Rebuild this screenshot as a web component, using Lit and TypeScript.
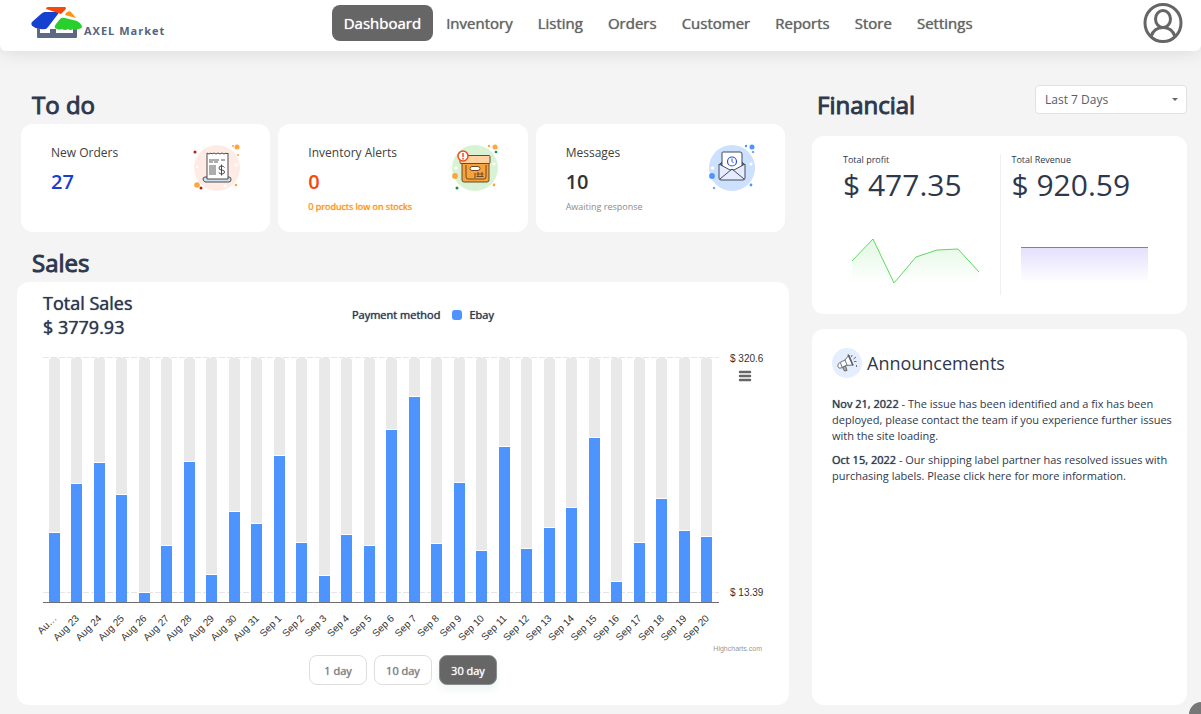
import { LitElement, html, css, svg } from "lit";
import { customElement, state } from "lit/decorators.js";
import { classMap } from "lit/directives/class-map.js";

const NAV = ["Dashboard", "Inventory", "Listing", "Orders", "Customer", "Reports", "Store", "Settings"];

/* Daily sales: axis label and bar height in chart units */
const SALES: [string, number][] = [
  ["Au…", 69], ["Aug 23", 118], ["Aug 24", 139], ["Aug 25", 107], ["Aug 26", 9], ["Aug 27", 56],
  ["Aug 28", 140], ["Aug 29", 27], ["Aug 30", 90], ["Aug 31", 78], ["Sep 1", 146], ["Sep 2", 59],
  ["Sep 3", 26], ["Sep 4", 67], ["Sep 5", 56], ["Sep 6", 172], ["Sep 7", 205], ["Sep 8", 58],
  ["Sep 9", 119], ["Sep 10", 51], ["Sep 11", 155], ["Sep 12", 53], ["Sep 13", 74], ["Sep 14", 94],
  ["Sep 15", 164], ["Sep 16", 20], ["Sep 17", 59], ["Sep 18", 103], ["Sep 19", 71], ["Sep 20", 65],
];

const logo = html`<svg width="52" height="32" viewBox="0 0 52 32" aria-hidden="true">
  <path d="M6 21h3v5h10v-4h6v4h17v-5h4v9q0 1-1 1H7q-1 0-1-1z" fill="#5a6a84" />
  <path d="M10 7Q12 5 14 5h12q2 0 1 2L17 20q-2 3-5 2-2 1-4-1-3 1-5-1-4-2-2-5z" fill="#1640d0" />
  <path d="M17 0h17q2 1 0 3l-4 4-15-5q0-2 2-2z" fill="#f7480b" />
  <path d="M35 6q3-3 5-1l5 6-11-3z" fill="#ff9212" />
  <path d="M25 17l4-5q2-2 5-1l12 3q4 2 5 5 0 3-4 3-2 2-5 0-3 2-5 0-3 2-6 0-3 1-5 0-4-1-1-5z" fill="#29cf2c" />
</svg>`;

const orderIcon = html`<svg width="50" height="50" viewBox="0 0 50 50" aria-hidden="true">
  <circle cx="24" cy="25" r="23" fill="#ffebe6" />
  <circle cx="44" cy="4" r="2.5" fill="#ffa53c" /><circle cx="40" cy="3" r="1" fill="#ffa53c" />
  <circle cx="45" cy="12" r="1" fill="#ffa53c" /><circle cx="43" cy="42" r="1.3" fill="#ffa53c" />
  <circle cx="4" cy="42" r="2.8" fill="#ffa53c" />
  <circle cx="2" cy="9" r="1.5" fill="#bf1d0a" /><circle cx="8" cy="45" r="1.5" fill="#bf1d0a" />
  <circle cx="4" cy="24" r="1.3" fill="#fff" /><circle cx="43" cy="22" r="1.6" fill="#fff" /><circle cx="32" cy="43" r="1.6" fill="#fff" />
  <path d="M12 34q-2 0-2 2t2 3h24q2 0 2-2.500T36 34z" fill="#cddff0" stroke="#4a4a4a" />
  <path d="M14 36V10l2 1 2-1 1 1 2-1 2 1 2-1 2 1 2-1 2 1 2-1 1 1 1-1v26z" fill="#fff" stroke="#4a4a4a" />
  <path d="M16 17h10M28 17h4M16 19h4M21 19h4M16 23h7M16 25h7M16 27h7M16 29h7M16 31h7" stroke="#4a4a4a" stroke-width=".9" />
  <path d="M31.500 24.500q-1-1.500-3-1.500-2.500 0-2.500 2t2.500 2q3 0 3 2t-2.500 2q-2 0-3.300-1.500M28.500 21.500v11" fill="none" stroke="#4a4a4a" />
</svg>`;

const stockIcon = html`<svg width="50" height="50" viewBox="0 0 50 50" aria-hidden="true">
  <circle cx="24" cy="25" r="23" fill="#d8f3d4" />
  <circle cx="44" cy="4" r="2.500" fill="#ffa53c" /><circle cx="38" cy="3" r="1.200" fill="#ffa53c" />
  <circle cx="45" cy="9" r="1.300" fill="#11914b" /><circle cx="6" cy="45" r="1.500" fill="#11914b" />
  <circle cx="43" cy="42" r="1.400" fill="#ffa53c" /><circle cx="4" cy="33" r="2.900" fill="#ffa53c" />
  <circle cx="5" cy="25" r="1.800" fill="#fff" /><circle cx="43" cy="21" r="1.600" fill="#fff" />
  <path d="M11 20h27v17q0 2-2 2H13q-2 0-2-2z" fill="#f8a33a" stroke="#6b4a2a" />
  <path d="M10 12.500h28q1 0 1 1v6q0 1-1 1H10q-1 0-1-1v-6q0-1 1-1z" fill="#ffd3a1" stroke="#6b4a2a" />
  <path d="M15 22v12q0 2 2 2h16q2 0 2-2V22M24 30v5M27 29v5M31 29v5M25.500 31h7M25.500 33.500h7" fill="none" stroke="#6b4a2a" />
  <rect x="19" y="23.500" width="10" height="4" rx="2" fill="#fff" stroke="#6b4a2a" />
  <circle cx="12" cy="13" r="5" fill="#fff" stroke="#f04a20" stroke-width="1.500" />
  <path d="M12 10v4M12 15v1.500" stroke="#f04a20" stroke-width="1.500" />
</svg>`;

const mailIcon = html`<svg width="50" height="50" viewBox="0 0 50 50" aria-hidden="true">
  <circle cx="24" cy="25" r="23" fill="#cce0ff" />
  <circle cx="44" cy="4" r="2.500" fill="#4d94ff" /><circle cx="38" cy="3" r="1.200" fill="#4d94ff" />
  <circle cx="45" cy="9" r="1.300" fill="#8f9df2" /><circle cx="6" cy="45" r="1.300" fill="#8f9df2" />
  <circle cx="43" cy="42" r="1.400" fill="#4d94ff" /><circle cx="4" cy="33" r="2.900" fill="#4d94ff" />
  <circle cx="4.500" cy="25" r="1.800" fill="#fff" /><circle cx="43" cy="21" r="1.600" fill="#fff" />
  <path d="M11 22l3-3v5zM37 22l-3-3v5z" fill="#4d94ff" stroke="#454a58" />
  <path d="M14 10q0-1 1-1h17q2 0 2 2v19H14z" fill="#fff" stroke="#454a58" />
  <circle cx="24" cy="18.500" r="4.500" fill="none" stroke="#2850d8" stroke-width="1.200" />
  <path d="M24 15.500v3l1.500 1.500" fill="none" stroke="#2850d8" />
  <path d="M11 21l11 6q2-1 4 0l11-6v14q0 2-2 2H13q-2 0-2-2z" fill="#e6ecff" stroke="#454a58" />
  <path d="M12 36l12-10 12 10" fill="none" stroke="#454a58" />
</svg>`;

const megaphone = html`<svg width="30" height="30" viewBox="0 0 30 30" aria-hidden="true">
  <circle cx="15" cy="15" r="15" fill="#e4eeff" />
  <g fill="#fff" stroke="#5c6068" stroke-width=".9">
    <path d="M10.500 19.500l2 3.500 2.500-.5-1.500-4.500z" fill="#aaa" />
    <path d="M8 14.500l5-2.500 4-5 4 10-7 .5-5 2.500q-2 1-3-1.500t2-4z" />
    <path d="M8.500 15l1.500 4M13 12l2 5" />
    <path d="M16 6.500l5 11" stroke-width="1.500" />
    <path d="M19.500 9l.5-2M21.500 11l2.500-2M22 13.500h2.500M24.500 17v2" />
  </g>
</svg>`;

@customElement("sales-chart")
export class SalesChart extends LitElement {
  static styles = css`
    :host { display: block; position: relative; }
    .plot { display: block; width: 100%; height: auto; font-family: "Liberation Sans", Arial, sans-serif; }
    .track { fill: #e9e9e9; }
    .bar { fill: #4d94ff; }
    .grid { stroke: #e6e6e6; stroke-dasharray: 6 2; }
    .axis { stroke: #6e6e6e; }
    .tick { font-size: 10px; fill: #333; text-anchor: end; }
    .scale { font-size: 10px; fill: #333; }
    .credit { font-size: 7px; fill: #999; text-anchor: end; }
    .menu {
      position: absolute; top: 28px; right: 35px; width: 18px; height: 18px;
      display: grid; place-items: center; padding: 0; border: 0; background: none;
    }
  `;

  render() {
    const base = 263;
    const step = 675 / SALES.length;
    return html`
      <svg class="plot" viewBox="0 0 772 316" role="img" aria-label="Total sales per day">
        <line class="grid" x1="26" x2="702" y1="18.500" y2="18.500" />
        <line class="grid" x1="26" x2="702" y1="253.500" y2="253.500" />
        ${SALES.map(([name, value], i) => {
          const mid = 26 + step * (i + 0.5);
          const x = Math.floor(mid - 5);
          return svg`
            <rect class="track" x=${x} y="19" width="11" height="244" rx="3" />
            <rect x=${x} y=${base - value - 1} width="11" height="1" fill="#fff" />
            <rect class="bar" x=${x} y=${base - value} width="11" height=${value} />
            <text class="tick" transform="translate(${mid + 3} 280) rotate(-45)">${name}</text>`;
        })}
        <line class="axis" x1="26" x2="702" y1="263.500" y2="263.500" />
        <text class="scale" x="713" y="23">$ 320.6</text>
        <text class="scale" x="713" y="257">$ 13.39</text>
        <text class="credit" x="745" y="312">Highcharts.com</text>
      </svg>
      <button class="menu" aria-label="Chart menu">
        <svg width="14" height="12" viewBox="0 0 14 12"><path d="M2 2h10M2 6h10M2 10h10" stroke="#666" stroke-width="2.500" stroke-linecap="round" /></svg>
      </button>`;
  }
}

@customElement("app-root")
export class AppRoot extends LitElement {
  @state() private range = "30 day";

  static styles = css`
    :host {
      display: flex; flex-direction: column; min-height: 100vh; box-sizing: border-box;
      background: #f4f4f4; color: #2e384d; font-family: "Open Sans", sans-serif; overflow: hidden;
      position: relative;
    }
    h1, h2, h3, p { margin: 0; font-weight: 400; }
    button, select { font-family: inherit; }
    .link, .range, .legend, .total, .amber, .date { font-weight: 400; text-shadow: 0 0 1px currentColor; }
    .top {
      display: flex; justify-content: space-between; align-items: center; height: 51px; box-sizing: border-box;
      padding: 0 18px 5px 31px; background: #fff; border-radius: 0 0 6px 6px; box-shadow: 0 0 20px rgba(0, 0, 0, .12);
    }
    .brand { display: flex; align-items: flex-end; gap: 1px; padding-right: 8px; color: #55647f; text-decoration: none; }
    .brand-name { font-size: 11px; line-height: 16px; font-weight: 700; letter-spacing: 1px; }
    .nav { display: flex; gap: 1px; }
    .link {
      padding: 6px 12px; border: 1px solid transparent; border-width: 1px 0; border-radius: 8px; color: #666; font-size: 15px; line-height: 22px;
      text-decoration: none;
    }
    .link.active { background: #666; color: #fff; }
    .avatar { display: block; padding: 0; border: 0; background: none; }
    .avatar svg { display: block; }
    .main {
      flex: 1; display: grid; grid-template-columns: minmax(0, 772fr) minmax(0, 375fr); gap: 23px;
      padding: 34px 14px 9px 17px;
    }
    .column { display: flex; flex-direction: column; }
    .title { font-size: 24px; line-height: 32px; -webkit-text-stroke: 1px currentColor; }
    .column > .title { padding: 4px 15px 3px; }
    .column > .title ~ .title { padding-top: 15px; }
    .card { background: #fff; border-radius: 12px; }
    .todos { display: grid; grid-template-columns: repeat(3, minmax(0, 1fr)); gap: 8px; padding: 0 4px; }
    .todo { display: flex; justify-content: space-between; padding: 19px 27px 18px 30px; }
    .label { font-size: 12px; line-height: 20px; color: #404040; }
    .count { padding: 5px 0 4px; font-size: 20px; line-height: 28px; font-weight: 600; }
    .note { min-height: 14px; font-size: 9px; line-height: 14px; }
    .blue { color: #1640d0; }
    .red { color: #f7480b; }
    .dark { color: #333; }
    .amber { color: #ff9212; }
    .grey { color: #8c8c8c; }
    .sales { flex: 1; padding: 9px 0 20px; }
    .sales-head { display: grid; grid-template-columns: 41fr 58fr; align-items: center; padding-left: 26px; }
    .total { font-size: 18px; line-height: 24px; }
    .legend { display: flex; align-items: center; font-size: 11px; line-height: 16px; }
    .swatch { width: 10px; height: 10px; margin: 0 7px 0 12px; border-radius: 3px; background: #4d94ff; }
    .ranges { display: flex; justify-content: center; gap: 7px; }
    .range {
      width: 58px; height: 30px; padding: 0; border: 1px solid #ddd; border-radius: 8px; background: #fff; color: #808080;
      font-size: 11px;
    }
    .range.active { border-color: #8c8c8c; background: #666; color: #fff; box-shadow: 0 4px 8px rgba(0, 128, 96, .08); }
    .finance-head { display: flex; justify-content: space-between; align-items: flex-start; padding-bottom: 15px; }
    .finance-head .title { padding: 4px 0 0 5px; }
    .period { position: relative; width: 152px; }
    .select {
      display: block; width: 100%; height: 29px; padding: 0 9px; border: 1px solid #e2e2e2; border-radius: 4px; background: #fff;
      color: #55606a; font-size: 12px; appearance: none;
    }
    .caret { position: absolute; right: 9px; top: 13px; pointer-events: none; }
    .finance { display: grid; grid-template-columns: 1fr 1fr; padding: 18px 31px 19px; margin-bottom: 15px; }
    .metric + .metric { border-left: 1px solid #f0f0f0; padding-left: 11px; }
    .metric-name { font-size: 9px; line-height: 12px; }
    .metric-value { font-size: 30px; line-height: 38px; }
    .spark { display: block; margin: 32px 0 11px 9px; }
    .news { flex: 1; padding: 19px 12px 19px 20px; }
    .news-head { display: flex; align-items: center; gap: 5px; margin-bottom: 18px; }
    .news-title { font-size: 18px; line-height: 30px; }
    .entry { padding-bottom: 8px; font-size: 11px; line-height: 16px; }
    .help { position: absolute; right: -13px; bottom: -13px; width: 25px; height: 25px; padding: 0; border: 0; border-radius: 50%; background: #777; }
  `;

  render() {
    return html`
      <header class="top">
        <a class="brand" href="#">${logo}<span class="brand-name">AXEL Market</span></a>
        <nav class="nav">
          ${NAV.map((n, i) => html`<a class=${classMap({ link: true, active: i === 0 })} href="#">${n}</a>`)}
        </nav>
        <button class="avatar" aria-label="Account">
          <svg width="40" height="42" viewBox="0 0 40 42" fill="none" stroke="#666" stroke-width="3">
            <ellipse cx="20" cy="21" rx="18" ry="18.500" /><ellipse cx="20" cy="17" rx="7.500" ry="8.500" />
            <path d="M8 34.500Q11 25.500 20 25.500T32 34.500" />
          </svg>
        </button>
      </header>
      <main class="main">
        <div class="column">
          <h2 class="title">To do</h2>
          <div class="todos">
            <section class="card todo">
              <div><h3 class="label">New Orders</h3><p class="count blue">27</p></div>
              ${orderIcon}
            </section>
            <section class="card todo">
              <div><h3 class="label">Inventory Alerts</h3><p class="count red">0</p><p class="note amber">0 products low on stocks</p></div>
              ${stockIcon}
            </section>
            <section class="card todo">
              <div><h3 class="label">Messages</h3><p class="count dark">10</p><p class="note grey">Awaiting response</p></div>
              ${mailIcon}
            </section>
          </div>
          <h2 class="title">Sales</h2>
          <section class="card sales">
            <div class="sales-head">
              <div><h3 class="total">Total Sales</h3><p class="total">$ 3779.93</p></div>
              <div class="legend">Payment method<span class="swatch"></span>Ebay</div>
            </div>
            <sales-chart></sales-chart>
            <div class="ranges">
              ${["1 day", "10 day", "30 day"].map((r) => html`<button
                class=${classMap({ range: true, active: r === this.range })}
                @click=${() => (this.range = r)}>${r}</button>`)}
            </div>
          </section>
        </div>
        <div class="column">
          <div class="finance-head">
            <h2 class="title">Financial</h2>
            <div class="period">
              <select class="select" aria-label="Period"><option>Last 7 Days</option></select>
              <svg class="caret" width="6" height="4" viewBox="0 0 6 4"><path d="M0 0h6L3 3z" fill="#666" /></svg>
            </div>
          </div>
          <section class="card finance">
            <div class="metric">
              <h3 class="metric-name">Total profit</h3>
              <p class="metric-value">$ 477.35</p>
              <svg class="spark" width="128" height="48" viewBox="0 0 128 48">
                <defs><linearGradient id="g" x2="0" y2="1"><stop stop-color="#29cf2c" stop-opacity=".14" /><stop offset="1" stop-color="#29cf2c" stop-opacity="0" /></linearGradient></defs>
                <path d="M0 25L21 3 42 47 64 21 85 14 106 13 127 36V47H0z" fill="url(#g)" />
                <path d="M0 25L21 3 42 47 64 21 85 14 106 13 127 36" fill="none" stroke="#5cdb5e" />
              </svg>
            </div>
            <div class="metric">
              <h3 class="metric-name">Total Revenue</h3>
              <p class="metric-value">$ 920.59</p>
              <svg class="spark" width="128" height="48" viewBox="0 0 128 48">
                <defs><linearGradient id="p" x2="0" y2="1"><stop stop-color="#7b5cf0" stop-opacity=".2" /><stop offset="1" stop-color="#7b5cf0" stop-opacity="0" /></linearGradient></defs>
                <path d="M0 11h127v36H0z" fill="url(#p)" /><path d="M0 11.500h127" stroke="#8b6cf0" />
              </svg>
            </div>
          </section>
          <section class="card news">
            <div class="news-head">${megaphone}<h2 class="news-title">Announcements</h2></div>
            <p class="entry"><b class="date">Nov 21, 2022</b> - The issue has been identified and a fix has been deployed, please contact the team if you experience further issues with the site loading.</p>
            <p class="entry"><b class="date">Oct 15, 2022</b> - Our shipping label partner has resolved issues with purchasing labels. Please click here for more information.</p>
          </section>
        </div>
      </main>
      <button class="help" aria-label="Help"></button>`;
  }
}
